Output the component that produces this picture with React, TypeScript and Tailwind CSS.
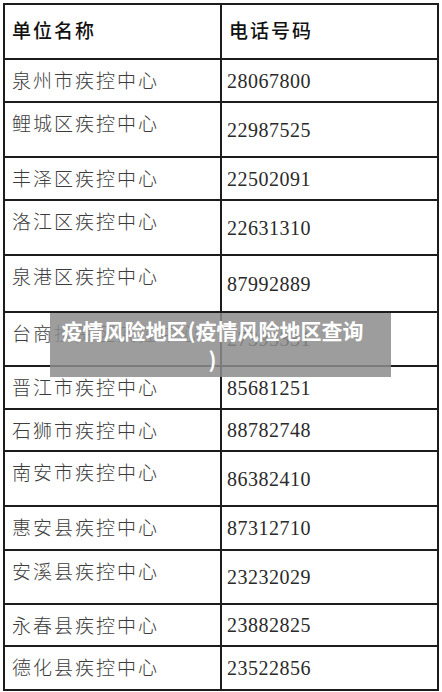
const rows = [
  { name: '泉州市疾控中心', phone: '28067800', h: 'h-[43px]' },
  { name: '鲤城区疾控中心', phone: '22987525', h: 'h-[55px]' },
  { name: '丰泽区疾控中心', phone: '22502091', h: 'h-[43px]' },
  { name: '洛江区疾控中心', phone: '22631310', h: 'h-[55px]' },
  { name: '泉港区疾控中心', phone: '87992889', h: 'h-[57px]' },
  { name: '台商投资区疾控中心', phone: '27393331', h: 'h-[54px]' },
  { name: '晋江市疾控中心', phone: '85681251', h: 'h-[43px]' },
  { name: '石狮市疾控中心', phone: '88782748', h: 'h-[42px]' },
  { name: '南安市疾控中心', phone: '86382410', h: 'h-[55px]' },
  { name: '惠安县疾控中心', phone: '87312710', h: 'h-[44px]' },
  { name: '安溪县疾控中心', phone: '23232029', h: 'h-[54px]' },
  { name: '永春县疾控中心', phone: '23882825', h: 'h-[42px]' },
  { name: '德化县疾控中心', phone: '23522856', h: 'h-[44px]' },
];

const cjk = "font-['Noto_Sans_CJK_SC',sans-serif]";

export default function App() {
  return (
    <div className="relative w-[442px] h-[692px] overflow-hidden bg-white">
      <div className="pt-[3px] pl-[3px]">
        <div className="w-[436px] border-t-2 border-x-2 border-[#1c1c1c]">
          {/* header */}
          <div className="flex h-[55px] border-b-2 border-[#1c1c1c]">
            <div className={`w-[217px] shrink-0 border-r-2 border-[#1c1c1c] flex items-center pl-[7px] pb-[2px] text-[19px] tracking-[2px] font-medium text-[#111] ${cjk}`}>
              单位名称
            </div>
            <div className={`flex-1 flex items-center pl-[7px] pb-[2px] text-[19px] tracking-[2px] font-medium text-[#111] ${cjk}`}>
              电话号码
            </div>
          </div>
          {rows.map((r) => (
            <div key={r.name} className={`flex ${r.h} border-b-2 border-[#1c1c1c]`}>
              <div className={`w-[217px] shrink-0 border-r-2 border-[#1c1c1c] pl-[7px] pt-[8px] leading-[24px] text-[19px] tracking-[2px] font-light text-[#3c3c3c] whitespace-nowrap overflow-hidden ${cjk}`}>
                {r.name}
              </div>
              <div className="flex-1 flex items-center pl-[5px] text-[20px] tracking-[0.5px] text-[#2a2a2a] font-['Liberation_Serif',serif]">
                {r.phone}
              </div>
            </div>
          ))}
        </div>
      </div>

      {/* title overlay */}
      <div className="absolute left-[50px] top-[313px] w-[341px] h-[64px] bg-[#8c8c8c]/85 flex items-center pl-[8px] pr-[24px]">
        <p className={`w-full text-center text-white font-bold text-[21px] leading-[29px] [line-break:anywhere] ${cjk}`}>
          疫情风险地区(疫情风险地区查询)
        </p>
      </div>
    </div>
  );
}
